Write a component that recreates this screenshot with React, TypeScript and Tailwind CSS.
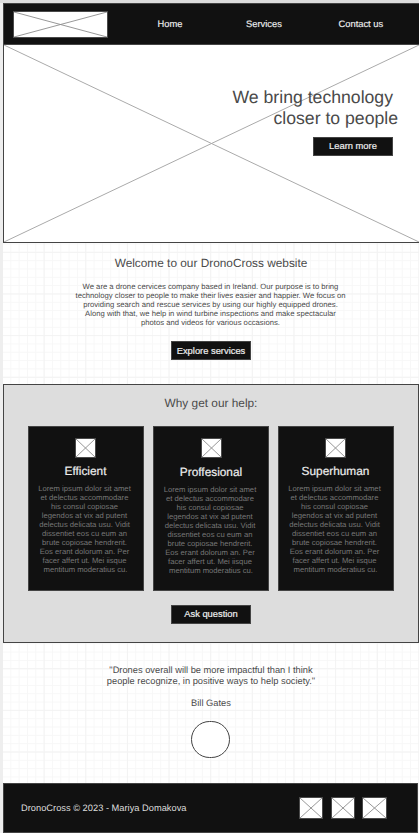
import type { ReactNode } from 'react';

function Crossed({ className }: { className: string }) {
  return (
    <div className={`shrink-0 border border-[#4a4a4a] bg-white ${className}`}>
      <svg className="block h-full w-full" viewBox="0 0 100 100" preserveAspectRatio="none">
        <path
          d="M0 0L100 100M100 0L0 100"
          stroke="#8c8c8c"
          strokeWidth="0.9"
          vectorEffect="non-scaling-stroke"
          fill="none"
        />
      </svg>
    </div>
  );
}

function Button({ children, className = '' }: { children: ReactNode; className?: string }) {
  return (
    <button
      className={`flex h-[19px] w-[80px] shrink-0 items-center justify-center whitespace-nowrap border border-[#444] bg-[#111] text-[9.35px] leading-[11px] text-[#eee] [-webkit-text-stroke:0.2px_#eee] ${className}`}
    >
      {children}
    </button>
  );
}

function Lines({ items }: { items: string[] }) {
  return (
    <>
      {items.map((line) => (
        <span key={line} className="block whitespace-nowrap">
          {line}
        </span>
      ))}
    </>
  );
}

const lorem = [
  'Lorem ipsum dolor sit amet',
  'et delectus accommodare',
  'his consul copiosae',
  'legendos at vix ad putent',
  'delectus delicata usu. Vidit',
  'dissentiet eos cu eum an',
  'brute copiosae hendrerit.',
  'Eos erant dolorum an. Per',
  'facer affert ut. Mei iisque',
];

function Card({ title, lower = false }: { title: string; lower?: boolean }) {
  return (
    <article className="flex h-[165px] w-[116px] flex-col items-center border border-[#444] bg-[#111] pt-[11px] text-center">
      <Crossed className={lower ? 'ml-px h-[20px] w-[21px]' : 'mr-px h-[20px] w-[21px]'} />
      <div className={lower ? 'pl-px pt-[6px]' : 'pt-[5px]'}>
        <h3 className="mr-px text-[11.85px] leading-[16px] text-[#eee] [-webkit-text-stroke:0.2px_#eee]">
          {title}
        </h3>
        <p className="mr-[3px] mt-[5px] text-[7.68px] leading-[9px] text-[#777]">
          <Lines items={lorem} />
          <span className="ml-[2px] block whitespace-nowrap">mentitum moderatius cu.</span>
        </p>
      </div>
    </article>
  );
}

export default function App() {
  return (
    <div className="h-[833px] w-[419px] overflow-hidden bg-[#eee] font-['Liberation_Sans',Arial,sans-serif] text-[#4a4a4a] [text-rendering:geometricPrecision]">
      <div className="h-[3px] bg-[#ddd]" />
      <main className="ml-[3px] h-[830px] bg-white bg-[linear-gradient(to_right,#f3f3f3_1px,transparent_1px),linear-gradient(to_bottom,#f3f3f3_1px,transparent_1px),linear-gradient(to_right,#f7f7f7_1px,transparent_1px),linear-gradient(to_bottom,#f7f7f7_1px,transparent_1px)] bg-[size:41.65px_41.65px,41.65px_41.65px,8.33px_8.33px,8.33px_8.33px] bg-[position:-1px_-1px]">
        <header className="flex h-[42px] items-center border border-r-0 border-[#444] bg-[#111] pl-[9px] text-[9.35px] text-[#eee] [-webkit-text-stroke:0.15px_#eee]">
          <Crossed className="h-[27px] w-[95px]" />
          <nav className="flex pt-px">
            <a className="ml-[49.5px] w-[26px] whitespace-nowrap">Home</a>
            <a className="ml-[62.5px] w-[36px] whitespace-nowrap">Services</a>
            <a className="ml-[56.5px] whitespace-nowrap">Contact us</a>
          </nav>
        </header>

        <section className="grid h-[198px] border-b border-l border-[#444] bg-white">
          <svg className="col-start-1 row-start-1 h-[197px] w-[415px]" viewBox="0 0 415 197">
            <path d="M0 0L415 197M415 0L0 197" stroke="#aaa" strokeWidth="1" fill="none" />
          </svg>
          <div className="z-10 col-start-1 row-start-1 flex flex-col items-end pr-[26px] pt-[42px]">
            <h1 className="text-right text-[17.65px] leading-[21px]">
              <span className="block whitespace-nowrap">We bring technology</span>
              <span className="-mr-[5px] block whitespace-nowrap">closer to people</span>
            </h1>
            <Button className="mt-[8px]">Learn more</Button>
          </div>
        </section>

        <section className="flex h-[141px] flex-col items-center pt-[12px] text-center">
          <h2 className="text-[11.85px] leading-[16px]">Welcome to our DronoCross website</h2>
          <p className="mr-px mt-[11px] text-[7.7px] leading-[9px]">
            <Lines
              items={[
                'We are a drone cervices company based in Ireland. Our purpose is to bring',
                'technology closer to people to make their lives easier and happier. We focus on',
                'providing search and rescue services by using our highly equipped drones.',
                'Along with that, we help in wind turbine inspections and make spectacular',
                'photos and videos for various occasions.',
              ]}
            />
          </p>
          <Button className="mt-[14px] pt-px">Explore services</Button>
        </section>

        <section className="flex h-[259px] flex-col items-center border border-[#444] bg-[#ddd]">
          <h2 className="mt-[10px] text-[11.85px] leading-[16px]">Why get our help:</h2>
          <div className="mt-[15px] flex gap-[9px]">
            <Card title="Efficient" />
            <Card title="Proffesional" lower />
            <Card title="Superhuman" />
          </div>
          <Button className="mt-[14px]">Ask question</Button>
        </section>

        <section className="flex h-[140px] flex-col items-center pt-[22px] text-center text-[9.3px] leading-[11px]">
          <blockquote>
            <Lines
              items={[
                '"Drones overall will be more impactful than I think',
                'people recognize, in positive ways to help society."',
              ]}
            />
          </blockquote>
          <p className="mt-[11px]">Bill Gates</p>
          <div className="mr-px mt-[12px] h-[37px] w-[39px] rounded-full border border-[#444] bg-white" />
        </section>

        <footer className="mr-px flex h-[50px] items-center border border-[#444] bg-[#111] pl-[17px] text-[9.3px] text-[#ddd]">
          <p className="w-[278px] whitespace-nowrap pt-px">DronoCross © 2023 - Mariya Domakova</p>
          <div className="flex gap-[8px]">
            <Crossed className="h-[22px] w-[24px]" />
            <Crossed className="h-[22px] w-[24px]" />
            <Crossed className="-ml-px h-[22px] w-[25px]" />
          </div>
        </footer>
      </main>
    </div>
  );
}
